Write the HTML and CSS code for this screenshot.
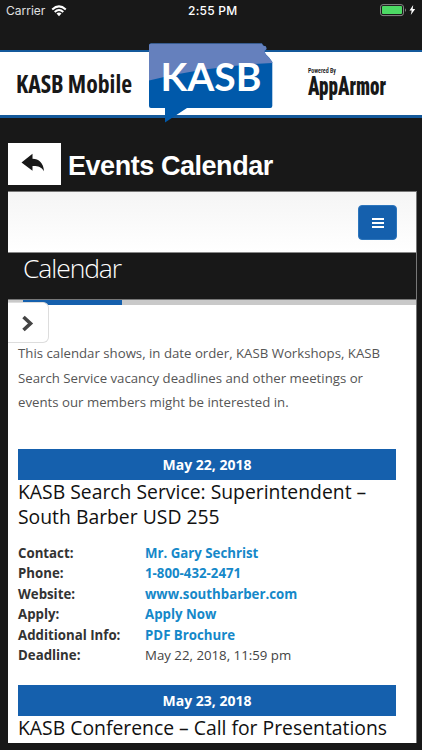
FILE: index.html
```html
<!DOCTYPE html>
<html lang="en">
<head>
<meta charset="utf-8">
<title>Events Calendar</title>
<link rel="stylesheet" href="styles.css">
</head>
<body>
<div class="status">
  <span class="carrier">Carrier</span>
  <svg class="wifi" width="16" height="12" viewBox="0 0 16 12" fill="none" stroke="#fff" stroke-width="2"><path d="M1.2 4.4Q8-1.6 14.8 4.4M3.7 7Q8 3.1 12.3 7"/><path d="M5.5 8.5Q8 6.5 10.5 8.5L8 11.2z" fill="#fff" stroke="none"/></svg>
  <span class="clock">2:55 PM</span>
  <svg class="battery" width="37" height="13" viewBox="0 0 37 13"><rect x=".5" y=".6" width="23" height="11" rx="2.5" fill="#181818" stroke="#858585"/><rect x="2" y="2.1" width="20" height="8" rx="1" fill="#4cd964"/><path d="M25 4.2q2 1.9 0 3.8z" fill="#858585"/><path d="M33.2 1L29.5 6.6h2.2L30.8 11l4.4-6h-2.5z" fill="#fff"/></svg>
</div>
<header class="banner">
  <svg width="422" height="84" viewBox="0 42 422 84">
    <rect y="50" width="422" height="68" fill="#14599b"/>
    <rect y="52" width="422" height="63" fill="#fff"/>
    <text class="condensed" x="16" y="92.5" font-size="24.5" textLength="116" lengthAdjust="spacingAndGlyphs">KASB Mobile</text>
    <path d="M151 43.5H262l1 2 3 1 .5 2.5-2 2 1 3 3.5 3.5 3.3 4.5V106q0 2-2 2H187L165 122.5V108h-14q-2 0-2-2V45.5q0-2 2-2z" fill="#0059aa"/>
    <path d="M151 43.5H262l1 2 3 1 .5 2.5-2 2 1 3 3.5 3.5 3.3 4.5v1Q205 66 149 80.5V45.5q0-2 2-2z" fill="#6580bd"/>
    <text class="logo" x="160.5" y="90.5" font-size="38" textLength="101" lengthAdjust="spacingAndGlyphs">KASB</text>
    <text class="condensed small" x="308" y="72.5" font-size="6.5" textLength="28" lengthAdjust="spacingAndGlyphs">Powered By</text>
    <text class="condensed armor" x="308" y="95" font-size="25" textLength="78" lengthAdjust="spacingAndGlyphs">AppArmor</text>
  </svg>
</header>
<div class="titlebar">
  <button class="back" aria-label="Back"><svg width="24" height="20" viewBox="0 0 24 20"><path d="M.5 9.6L11.5 .8V5.8C18 6 22.5 10 23 18.2C20 13.5 16.5 12.8 11.5 13V17.8z" fill="#181818"/></svg></button>
  <h1>Events Calendar</h1>
</div>
<main class="panel">
  <div class="nav">
    <button class="menu" aria-label="Menu"><i></i><i></i><i></i></button>
  </div>
  <div class="heading"><h2>Calendar</h2></div>
  <div class="rule"><div class="accent"></div></div>
  <div class="side"><svg width="12" height="17" viewBox="0 0 12 17" fill="none" stroke="#444" stroke-width="3.6"><path d="M1.5 2L8.5 8.5L1.5 15"/></svg></div>
  <div class="content">
    <p class="intro">This calendar shows, in date order, KASB Workshops, KASB<br>Search Service vacancy deadlines and other meetings or<br>events our members might be interested in.</p>
    <div class="date">May 22, 2018</div>
    <h3>KASB Search Service: Superintendent –<br>South Barber USD 255</h3>
    <dl>
      <dt>Contact:</dt><dd><a>Mr. Gary Sechrist</a></dd>
      <dt>Phone:</dt><dd><a>1-800-432-2471</a></dd>
      <dt>Website:</dt><dd><a>www.southbarber.com</a></dd>
      <dt>Apply:</dt><dd><a>Apply Now</a></dd>
      <dt>Additional Info:</dt><dd><a>PDF Brochure</a></dd>
      <dt>Deadline:</dt><dd>May 22, 2018, 11:59 pm</dd>
    </dl>
    <div class="date">May 23, 2018</div>
    <h3>KASB Conference – Call for Presentations</h3>
  </div>
</main>
</body>
</html>
```
FILE: styles.css
```css
* { box-sizing: border-box; }
body { margin: 0; width: 422px; height: 750px; overflow: hidden; background: #181818; font-family: "Open Sans", sans-serif; }
h1, h2, h3, p, dl, dd { margin: 0; font-weight: 400; }
button { border: 0; padding: 0; }
svg { display: block; }
.status { display: grid; grid-template-columns: 45px 1fr 37px; align-items: center; position: relative; height: 22px; padding: 0 4px 0 6px; color: #fff; font: 12px/22px Inter, sans-serif; }
.carrier { letter-spacing: 0; color: #e0e0e0; }
.wifi { margin-top: -1px; }
.clock { position: absolute; left: 188px; font-weight: 500; letter-spacing: .25px; }
.battery { grid-column: 3; margin-left: -1px; margin-top: -1px; }
.banner { margin-top: 20px; height: 84px; }
.condensed { font-family: "Open Sans", sans-serif; font-weight: 700; fill: #181818; font-stretch: condensed; }
.small { font-family: Roboto, sans-serif; font-weight: 600; }
.armor { font-family: Roboto, sans-serif; font-weight: 900; }
.logo { font-family: Lato, sans-serif; font-weight: 700; fill: #fff; }
.titlebar { display: flex; align-items: center; height: 42px; margin: 17px 0 6px 8px; gap: 7px; }
.back { width: 53px; height: 42px; background: #fff; display: flex; align-items: center; justify-content: center; }
.back svg { margin-top: -2px; margin-left: -3px; }
h1 { font: 700 27px/42px "Liberation Sans", sans-serif; color: #fff; letter-spacing: -.45px; margin-top: 3px; }
.panel { margin-left: 8px; width: 409px; height: 552px; background: #fff; overflow: hidden; border-top: 1px solid #777; border-right: 1px solid #777; }
.nav { height: 61px; display: flex; justify-content: flex-end; padding: 13px 19px 0; background: linear-gradient(#f5f5f5, #fff); border-bottom: 1px solid #888; }
.menu { width: 39px; height: 35px; border-radius: 4px; background: #1560ad; display: flex; flex-direction: column; align-items: center; justify-content: center; gap: 2px; border: 1px solid #2d76bd; }
.menu i { width: 12px; height: 2px; background: #fff; }
.heading { height: 46px; background: #181818; padding-left: 15px; }
h2 { font-size: 26.5px; line-height: 31px; font-weight: 300; color: #fff; letter-spacing: -1.1px; }
.rule { height: 6px; background: #c9c9c9; padding-left: 15px; border-top: 1px solid #777; }
.accent { width: 99px; height: 5px; background: #1560ad; }
.side { width: 41px; height: 41px; margin-top: -3px; border: 1.5px solid #ddd; border-left: 0; border-radius: 0 6px 6px 0; background: #fff; position: relative; padding: 12px 0 0 14px; }
.content { padding: 0 20px 0 10px; }
.intro { font-size: 13.23px; line-height: 24.5px; color: #555; height: 107px; white-space: nowrap; margin-top: -2px; margin-bottom: 1px; }
.date { height: 31px; line-height: 31px; background: #1560ad; color: #fff; font-weight: 700; font-size: 14px; text-align: center; }
h3 { font-size: 19.35px; line-height: 24.5px; color: #111; white-space: nowrap; }
dl { display: grid; grid-template-columns: 127px 1fr; font-size: 13.25px; line-height: 20.4px; color: #444; margin: 14px 0 20px; }
dt { font-weight: 700; color: #333; }
a { font-weight: 700; color: #1588c9; }
```
